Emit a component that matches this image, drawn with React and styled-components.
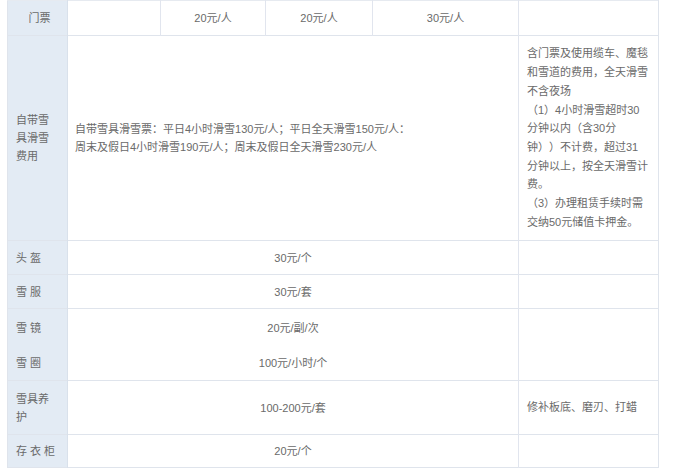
import React from 'react';
import styled, { createGlobalStyle } from 'styled-components';

const GlobalStyle = createGlobalStyle`
  html, body {
    margin: 0;
    padding: 0;
    background: #ffffff;
  }
  body {
    font-family: "Liberation Sans", "Noto Sans CJK SC", sans-serif;
    font-size: 11px;
    color: #6a6a6a;
    text-spacing-trim: space-all;
  }
`;

const Page = styled.div`
  padding: 0 0 0 7px;
`;

const PriceTable = styled.table`
  width: 651px;
  border-collapse: collapse;
  table-layout: fixed;
  border: 1px solid #dfe4ec;
  border-top: 1px solid #e6eaf0;
`;

const Row = styled.tr`
  height: ${(p) => p.$h}px;
  border-bottom: ${(p) => (p.$open ? 'none' : '1px solid #dfe4ec')};
`;

const Label = styled.td`
  background: #e3ebf4;
  border-right: 1px solid #d9e1eb;
  padding: 0 4px 0 8px;
  text-align: ${(p) => (p.$center ? 'center' : 'left')};
  vertical-align: middle;
  line-height: 18px;
`;

const Cell = styled.td`
  border-right: 1px solid #e1e5ee;
  padding: 0 7px;
  text-align: ${(p) => (p.$left ? 'left' : 'center')};
  vertical-align: middle;
  line-height: 18px;
`;

const Note = styled.td`
  padding: 0 4px 0 8px;
  text-align: left;
  vertical-align: middle;
  line-height: 18.7px;
`;

const rentals = [
  { label: '头 盔', price: '30元/个', h: 34 },
  { label: '雪 服', price: '30元/套', h: 34 },
];

export default function App() {
  return (
    <>
      <GlobalStyle />
      <Page>
        <PriceTable>
          <colgroup>
            <col style={{ width: 60 }} />
            <col style={{ width: 93 }} />
            <col style={{ width: 105 }} />
            <col style={{ width: 107 }} />
            <col style={{ width: 146 }} />
            <col style={{ width: 140 }} />
          </colgroup>
          <tbody>
            <Row $h={35}>
              <Label $center>门票</Label>
              <Cell />
              <Cell>20元/人</Cell>
              <Cell>20元/人</Cell>
              <Cell>30元/人</Cell>
              <Note />
            </Row>
            <Row $h={205}>
              <Label>
                自带雪<br />具滑雪<br />费用
              </Label>
              <Cell colSpan={4} $left>
                自带雪具滑雪票：平日4小时滑雪130元/人；平日全天滑雪150元/人：<br />
                周末及假日4小时滑雪190元/人；周末及假日全天滑雪230元/人
              </Cell>
              <Note>
                含门票及使用缆车、魔毯<br />
                和雪道的费用，全天滑雪<br />
                不含夜场<br />
                （1）4小时滑雪超时30<br />
                分钟以内（含30分<br />
                钟））不计费，超过31<br />
                分钟以上，按全天滑雪计<br />
                费。<br />
                （3）办理租赁手续时需<br />
                交纳50元储值卡押金。
              </Note>
            </Row>
            {rentals.map((r) => (
              <Row key={r.label} $h={r.h}>
                <Label>{r.label}</Label>
                <Cell colSpan={4}>{r.price}</Cell>
                <Note />
              </Row>
            ))}
            <Row $h={38} $open>
              <Label>雪 镜</Label>
              <Cell colSpan={4}>20元/副/次</Cell>
              <Note />
            </Row>
            <Row $h={34}>
              <Label>雪 圈</Label>
              <Cell colSpan={4}>100元/小时/个</Cell>
              <Note />
            </Row>
            <Row $h={54}>
              <Label>
                雪具养<br />护
              </Label>
              <Cell colSpan={4}>100-200元/套</Cell>
              <Note>修补板底、磨刃、打蜡</Note>
            </Row>
            <Row $h={33}>
              <Label>存 衣 柜</Label>
              <Cell colSpan={4}>20元/个</Cell>
              <Note />
            </Row>
          </tbody>
        </PriceTable>
      </Page>
    </>
  );
}
